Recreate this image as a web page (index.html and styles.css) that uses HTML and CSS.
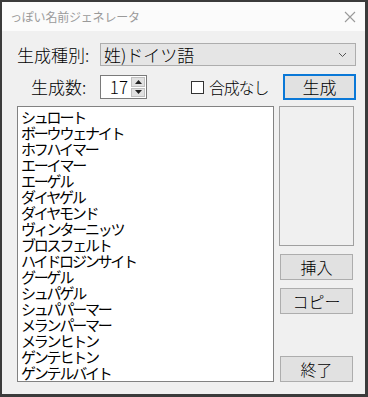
FILE: index.html
```html
<!DOCTYPE html>
<html lang="ja">
<head>
<meta charset="utf-8">
<link rel="stylesheet" href="styles.css">
</head>
<body>
<div class="window">
  <div class="titlebar">
    <span class="title">っぽい名前ジェネレータ</span>
    <svg class="close" width="12" height="12" viewBox="0 0 12 12"><path d="M1 1L11 11M11 1L1 11" stroke="#9a9a9a" stroke-width="1.1" fill="none"/></svg>
  </div>
  <div class="client">
    <div class="row1">
      <span class="label kind">生成種別:</span>
      <div class="combo">
        <span class="combo-text">姓)ドイツ語</span>
        <svg class="chev" width="9" height="6" viewBox="0 0 9 6"><path d="M1 1L4.5 4.5L8 1" stroke="#555" stroke-width="1" fill="none"/></svg>
      </div>
    </div>
    <div class="row2">
      <span class="label count">生成数:</span>
      <div class="spin">
        <span class="spin-val">17</span>
        <div class="spin-btns">
          <div class="sb"><svg width="7" height="4" viewBox="0 0 7 4"><path d="M0 4L3.5 0L7 4Z" fill="#222"/></svg></div>
          <div class="sb"><svg width="7" height="4" viewBox="0 0 7 4"><path d="M0 0L3.5 4L7 0Z" fill="#222"/></svg></div>
        </div>
      </div>
      <div class="check"><span class="box"></span><span class="check-label">合成なし</span></div>
      <button class="btn default">生成</button>
    </div>
    <div class="row3">
      <div class="list">
        <div>シュロート</div>
        <div>ボーウウェナイト</div>
        <div>ホフハイマー</div>
        <div>エーイマー</div>
        <div>エーゲル</div>
        <div>ダイヤゲル</div>
        <div>ダイヤモンド</div>
        <div>ヴィンターニッツ</div>
        <div>ブロスフェルト</div>
        <div>ハイドロジンサイト</div>
        <div>グーゲル</div>
        <div>シュパゲル</div>
        <div>シュパパーマー</div>
        <div>メランパーマー</div>
        <div>メランヒトン</div>
        <div>ゲンテヒトン</div>
        <div>ゲンテルバイト</div>
      </div>
      <div class="side">
        <div class="panel"></div>
        <button class="btn insert">挿入</button>
        <button class="btn copy">コピー</button>
        <button class="btn quit">終了</button>
      </div>
    </div>
  </div>
</div>
</body>
</html>
```
FILE: styles.css
```css
html, body {
  margin: 0;
  padding: 0;
}
body {
  width: 368px;
  height: 397px;
  background: #3b3b3b;
  font-family: "Noto Sans CJK JP", "Noto Sans", sans-serif;
  color: #000;
  overflow: hidden;
}
.window {
  margin: 2px 3px 0 2px;
  width: 363px;
  height: 392px;
  background: #f0f0f0;
  display: flex;
  flex-direction: column;
}
.titlebar {
  height: 29px;
  background: #fbfbfb;
  display: flex;
  align-items: center;
  justify-content: space-between;
  padding: 0 9px 0 8px;
  flex: none;
}
.title {
  font-size: 12px;
  color: #9a9a9a;
  font-feature-settings: "pwid";
  letter-spacing: -0.2px;
}
.client {
  padding: 12px 9px 0 15px;
  display: flex;
  flex-direction: column;
}
.label {
  font-size: 17px;
  line-height: 20px;
  white-space: nowrap;
  font-weight: 300;
}
.row1 {
  display: flex;
  align-items: center;
  height: 23px;
}
.kind {
  width: 83px;
}
.combo {
  flex: 1;
  height: 21px;
  border: 1px solid #adadad;
  background: #e5e5e5;
  display: flex;
  align-items: center;
  justify-content: space-between;
  padding: 0 8px 0 3px;
}
.combo-text {
  font-size: 17px;
  line-height: 20px;
  font-weight: 300;
  font-feature-settings: "pwid";
}
.row2 {
  display: flex;
  align-items: center;
  margin-top: 8px;
  height: 26px;
}
.count {
  width: 69px;
  margin-left: 14px;
}
.spin {
  width: 45px;
  height: 22px;
  border: 1px solid #7a7a7a;
  background: #fff;
  display: flex;
  align-items: center;
  justify-content: flex-end;
}
.spin-val {
  font-size: 17px;
  line-height: 20px;
  font-weight: 300;
  margin-right: 3px;
}
.spin-btns {
  width: 14px;
  height: 20px;
  display: flex;
  flex-direction: column;
  gap: 1px;
  margin-right: 1px;
}
.sb {
  flex: 1;
  background: #e1e1e1;
  border: 1px solid #c0c0c0;
  display: flex;
  align-items: center;
  justify-content: center;
}
.check {
  display: flex;
  align-items: center;
  margin-left: 44px;
}
.box {
  width: 11px;
  height: 11px;
  border: 1px solid #333;
  background: #fff;
}
.check-label {
  font-size: 16px;
  line-height: 20px;
  font-weight: 300;
  margin-left: 5px;
  letter-spacing: -1.2px;
  font-feature-settings: "pwid";
}
.btn {
  font-family: "Noto Sans CJK JP", "Noto Sans", sans-serif;
  font-size: 16px;
  font-weight: 300;
  color: #000;
  background: #e1e1e1;
  border: 1px solid #adadad;
  width: 73px;
  height: 26px;
  padding: 0;
  line-height: 20px;
}
.btn.default {
  margin-left: auto;
  border: 2px solid #0a78d7;
  font-size: 17px;
}
.row3 {
  display: flex;
  margin-top: 6px;
  gap: 5px;
}
.list {
  width: 257px;
  border: 1px solid #828282;
  background: #fff;
  padding: 2px 0 0 3px;
  box-sizing: border-box;
  height: 276px;
  overflow: hidden;
}
.list div {
  font-size: 15px;
  line-height: 16px;
  height: 16px;
  font-feature-settings: "pwid";
  letter-spacing: -2.2px;
  white-space: nowrap;
}
.side {
  display: flex;
  flex-direction: column;
  width: 75px;
}
.panel {
  height: 138px;
  border: 1px solid #a0a0a0;
  background: #f0f0f0;
}
.insert {
  margin-top: 8px;
  margin-left: 1px;
}
.copy {
  margin-top: 8px;
  margin-left: 1px;
}
.quit {
  margin-top: 42px;
  margin-left: 1px;
}
```
